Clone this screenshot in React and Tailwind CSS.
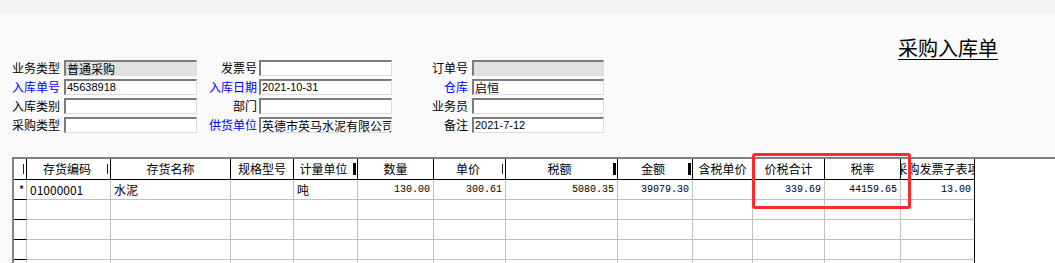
const cols = [
  { w: 'w-[13px]', h: '', mark: 'tick', al: 'center' },
  { w: 'w-[84px]', h: '存货编码', mark: 'tick', al: 'left' },
  { w: 'w-[120px]', h: '存货名称', al: 'left' },
  { w: 'w-[63px]', h: '规格型号', al: 'left' },
  { w: 'w-[64px]', h: '计量单位', mark: 'block', al: 'left' },
  { w: 'w-[76px]', h: '数量', al: 'right' },
  { w: 'w-[72px]', h: '单价', mark: 'tick', al: 'right' },
  { w: 'w-[112px]', h: '税额', mark: 'block', al: 'right' },
  { w: 'w-[75px]', h: '金额', mark: 'block', al: 'right' },
  { w: 'w-[60px]', h: '含税单价', al: 'right' },
  { w: 'w-[72px]', h: '价税合计', al: 'right' },
  { w: 'w-[76px]', h: '税率', al: 'right' },
  { w: 'w-[74px]', h: '采购发票子表项', al: 'right' },
];

const row1 = ['*', '01000001', '水泥', '', '吨', '130.00', '300.61', '5080.35', '39079.30', '', '339.69', '44159.65', '13.00'];

const Input = ({ value, disabled, w, mono }) => (
  <div
    className={`${w} h-[16px] border-t-2 border-l-2 border-[#7c7c7c] border-b border-r border-b-[#dcdcdc] border-r-[#dcdcdc] flex items-center pl-[1px] overflow-hidden whitespace-nowrap ${disabled ? 'bg-[#e0e0e0]' : 'bg-white'} ${mono ? "font-['Liberation_Sans'] text-[11px]" : 'text-[12px]'}`}
  >
    {value}
  </div>
);

const Label = ({ text, blue, w, right }) => (
  <div className={`${w} ${right ? 'text-right' : 'text-left'} text-[12px] leading-[16px] whitespace-nowrap ${blue ? 'text-[#0000ff]' : 'text-black'}`}>
    {text}
  </div>
);

const HeaderCell = ({ c, last }) => (
  <div className={`${c.w} shrink-0 h-[21px] border-b border-r border-black flex items-center overflow-hidden whitespace-nowrap ${last ? 'justify-center' : ''}`}>
    {last ? (
      <span className="text-[12px]">{c.h}</span>
    ) : (
      <>
        <span className="flex-1 text-center text-[12px]">{c.h}</span>
        {c.mark === 'tick' && <span className="w-[1px] h-[10px] bg-[#222] mr-[2px]" />}
        {c.mark === 'block' && <span className="w-[3px] h-[12px] bg-black mr-[1px]" />}
      </>
    )}
  </div>
);

const BodyCell = ({ c, v, i, last }) => {
  const ind = i === 0;
  const num = c.al === 'right';
  return (
    <div
      className={`${c.w} shrink-0 h-[20px] border-r flex items-center overflow-hidden whitespace-nowrap ${last ? 'border-black' : 'border-[#c0c0c0]'} ${ind ? 'border-b border-b-black justify-center' : 'border-b border-b-[#c0c0c0]'} ${num ? "justify-end pr-[3px] font-['Liberation_Mono'] text-[10px]" : 'pl-[3px] text-[12px]'}`}
    >
      {v}
    </div>
  );
};

export default function App() {
  const blank = cols.map(() => '');
  const rows = [row1, blank, blank, blank, blank];
  return (
    <div className="relative w-[1055px] h-[263px] overflow-hidden bg-[#fafafa] text-black font-['Noto_Sans_CJK_SC','Noto_Sans',sans-serif]">
      <div className="h-[14px] bg-[#f3f3f3]" />

      <div className="flex items-start h-[143px]">
        <div className="flex pt-[46px] pl-[12px]">
          {/* column 1 */}
          <div className="flex flex-col gap-[3px]">
            <div className="flex items-center gap-[4px]"><Label w="w-[48px]" text="业务类型" /><Input w="w-[133px]" value="普通采购" disabled /></div>
            <div className="flex items-center gap-[4px]"><Label w="w-[48px]" text="入库单号" blue /><Input w="w-[133px]" value="45638918" mono /></div>
            <div className="flex items-center gap-[4px]"><Label w="w-[48px]" text="入库类别" /><Input w="w-[133px]" /></div>
            <div className="flex items-center gap-[4px]"><Label w="w-[48px]" text="采购类型" /><Input w="w-[133px]" /></div>
          </div>
          {/* column 2 */}
          <div className="flex flex-col gap-[3px]">
            <div className="flex items-center gap-[2px]"><Label w="w-[60px]" right text="发票号" /><Input w="w-[133px]" /></div>
            <div className="flex items-center gap-[2px]"><Label w="w-[60px]" right text="入库日期" blue /><Input w="w-[133px]" value="2021-10-31" mono /></div>
            <div className="flex items-center gap-[2px]"><Label w="w-[60px]" right text="部门" /><Input w="w-[133px]" /></div>
            <div className="flex items-center gap-[2px]"><Label w="w-[60px]" right text="供货单位" blue /><Input w="w-[133px]" value="英德市英马水泥有限公司" /></div>
          </div>
          {/* column 3 */}
          <div className="flex flex-col gap-[3px]">
            <div className="flex items-center gap-[4px]"><Label w="w-[76px]" right text="订单号" /><Input w="w-[132px]" disabled /></div>
            <div className="flex items-center gap-[4px]"><Label w="w-[76px]" right text="仓库" blue /><Input w="w-[132px]" value="启恒" /></div>
            <div className="flex items-center gap-[4px]"><Label w="w-[76px]" right text="业务员" /><Input w="w-[132px]" /></div>
            <div className="flex items-center gap-[4px]"><Label w="w-[76px]" right text="备注" /><Input w="w-[132px]" value="2021-7-12" mono /></div>
          </div>
        </div>
        <div className="ml-[294px] pt-[21px]">
          <div className="text-[20px] leading-[26px] font-normal underline underline-offset-[3px] decoration-1">采购入库单</div>
        </div>
      </div>

      {/* grid */}
      <div className="ml-[12px] h-[106px] bg-white border-t-2 border-l-2 border-[#808080] overflow-hidden">
        <div className="flex">
          {cols.map((c, i) => (
            <HeaderCell key={i} c={c} last={i === cols.length - 1} />
          ))}
        </div>
        {rows.map((r, ri) => (
          <div key={ri} className="flex">
            {cols.map((c, i) => (
              <BodyCell key={i} c={c} v={r[i]} i={i} last={i === cols.length - 1} />
            ))}
          </div>
        ))}
      </div>

      {/* highlight annotation */}
      <div className="absolute left-[752px] top-[153px] w-[159px] h-[56px] border-[3px] border-[#ff2a2a] rounded-[3px]" />
    </div>
  );
}
